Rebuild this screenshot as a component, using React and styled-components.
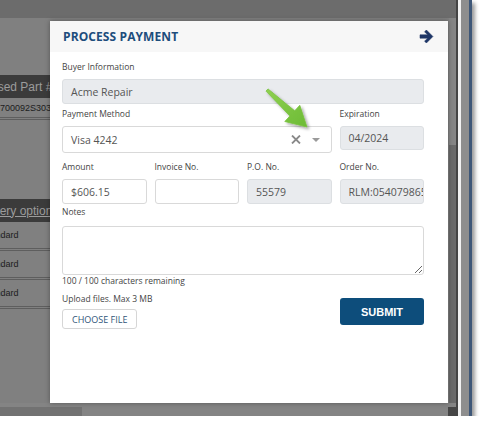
import styled, { createGlobalStyle } from "styled-components";

const GlobalStyle = createGlobalStyle`
  body {
    margin: 0;
    background: #ffffff;
    font-family: "Open Sans", "Liberation Sans", sans-serif;
  }
`;

const Shot = styled.div`
  position: relative;
  display: flex;
  width: 472px;
  height: 416px;
  background: #808080;
  box-shadow: 3px 3px 4px rgba(0, 0, 0, 0.4);
  overflow: hidden;
`;

const Page = styled.div`
  flex: 1;
  display: flex;
  flex-direction: column;
`;

const TopBar = styled.div`
  height: 18px;
  background: #6c6c6c;
`;

const PageBody = styled.div`
  flex: 1;
  display: flex;
`;

const Table = styled.div`
  width: 50px;
  display: flex;
  flex-direction: column;
  padding-top: 57px;
  font-family: "Liberation Sans", Arial, sans-serif;
  white-space: nowrap;
  overflow: hidden;
`;

const HeadBand = styled.div`
  height: 23px;
  margin-top: ${(p) => p.$gap || 0}px;
  display: flex;
  align-items: center;
  background: #3b3b3b;
  color: #9c9c9c;
  font-size: 12px;
  text-decoration: ${(p) => (p.$underline ? "underline" : "none")};
`;

const Clip = styled.span`
  margin-left: ${(p) => p.$shift || 0}px;
`;

const Cell = styled.div`
  height: ${(p) => p.$h || 28}px;
  display: flex;
  align-items: center;
  box-sizing: border-box;
  border-bottom: 3px double #5e5e5e;
  color: #1c1c1c;
  font-size: 9px;
`;

const Filler = styled.div`
  flex: 1;
`;

const ScrollTrack = styled.div`
  width: 7px;
  display: flex;
  flex-direction: column;
`;

const TrackPart = styled.div`
  height: ${(p) => (p.$h ? `${p.$h}px` : "auto")};
  flex: ${(p) => (p.$h ? "none" : 1)};
  background: ${(p) => p.$bg};
`;

const BottomBar = styled.div`
  height: 13px;
  display: flex;
  align-items: flex-end;
  background: #848484;
`;

const BottomSeg = styled.div`
  width: ${(p) => p.$w}px;
  height: 9px;
  background: ${(p) => p.$bg};
`;

const Strip = styled.div`
  width: ${(p) => p.$w}px;
  background: ${(p) => p.$bg};
`;

const Modal = styled.div`
  position: absolute;
  left: 50px;
  top: 21px;
  width: 398px;
  height: 382px;
  background: #ffffff;
  box-shadow: 0 0 5px rgba(0, 0, 0, 0.35);
  display: flex;
  flex-direction: column;
`;

const Header = styled.div`
  height: 31px;
  display: flex;
  align-items: center;
  justify-content: space-between;
  padding: 0 14px 0 13px;
  background: #f7f7f7;
`;

const Title = styled.h2`
  margin: 0;
  font-size: 12px;
  font-weight: 700;
  color: #1d4d7c;
  letter-spacing: 0.1px;
`;

const Body = styled.div`
  padding: 9px 24px 0 12px;
  display: flex;
  flex-direction: column;
`;

const Row = styled.div`
  display: grid;
  grid-template-columns: repeat(4, 1fr);
  column-gap: 8px;
  margin-top: ${(p) => p.$mt || 0}px;
`;

const Field = styled.div`
  display: flex;
  flex-direction: column;
  grid-column: span ${(p) => p.$span || 1};
  min-width: 0;
`;

const Label = styled.label`
  font-size: 8.5px;
  line-height: 12px;
  color: #444;
  margin-bottom: ${(p) => p.$mb ?? 6}px;
`;

const Input = styled.div`
  box-sizing: border-box;
  height: ${(p) => p.$h || 25}px;
  display: flex;
  align-items: center;
  padding: 0 8px;
  border: 1px solid ${(p) => (p.$readOnly ? "#dcdfe2" : "#d9d9d9")};
  border-radius: 3px;
  background: ${(p) => (p.$readOnly ? "#e9ebee" : "#ffffff")};
  color: #555;
  font-size: 10.5px;
  white-space: nowrap;
  overflow: hidden;
`;

const SelectValue = styled.span`
  flex: 1;
`;

const SelectControls = styled.div`
  display: flex;
  align-items: center;
  gap: 11px;
  margin-right: 3px;
`;

const TextArea = styled.textarea`
  box-sizing: border-box;
  height: 49px;
  margin-top: 2px;
  border: 1px solid #d9d9d9;
  border-radius: 3px;
  font-family: inherit;
`;

const Hint = styled.div`
  font-size: 8.5px;
  line-height: 12px;
  color: #444;
  margin-top: ${(p) => p.$mt || 0}px;
`;

const Footer = styled.div`
  display: flex;
  justify-content: space-between;
  align-items: flex-start;
`;

const Upload = styled.div`
  display: flex;
  flex-direction: column;
  align-items: flex-start;
`;

const FileButton = styled.button`
  box-sizing: border-box;
  height: 20px;
  margin-top: 4px;
  padding: 0 9px;
  border: 1px solid #d6d6d6;
  border-radius: 3px;
  background: #ffffff;
  color: #2f5579;
  font-family: "Open Sans", sans-serif;
  font-size: 9px;
`;

const SubmitButton = styled.button`
  box-sizing: border-box;
  width: 84px;
  height: 27px;
  margin-top: 11px;
  border: none;
  border-radius: 3px;
  background: #0d4d7b;
  color: #ffffff;
  font-family: "Liberation Sans", Arial, sans-serif;
  font-size: 11px;
  font-weight: 700;
`;

const Pointer = styled.svg`
  position: absolute;
  left: 255px;
  top: 80px;
  width: 60px;
  height: 55px;
  overflow: visible;
`;

const ArrowRight = () => (
  <svg width="15" height="13" viewBox="0 0 16 14">
    <path
      d="M1 5.2 H9.2 L5.9 1.9 L7.9 0 L14.9 7 L7.9 14 L5.9 12.1 L9.2 8.8 H1 Z"
      fill="#1d3566"
      stroke="#1d3566"
      strokeWidth="0.6"
      strokeLinejoin="round"
    />
  </svg>
);

const ClearIcon = () => (
  <svg width="10" height="9" viewBox="0 0 10 9">
    <path d="M1 0.5 L9 8.5 M9 0.5 L1 8.5" stroke="#8a8a8a" strokeWidth="1.8" />
  </svg>
);

const Caret = () => (
  <svg width="8" height="4" viewBox="0 0 8 4">
    <path d="M0 0 H8 L4 4 Z" fill="#9a9a9a" />
  </svg>
);

const deliveryRows = ["Standard", "Standard", "Standard"];

export default function App() {
  return (
    <>
      <GlobalStyle />
      <Shot>
        <Page>
          <TopBar />
          <PageBody>
            <Table>
              <HeadBand>
                <Clip $shift={-11}>Used Part #</Clip>
              </HeadBand>
              <Cell $h={22}>700092S3030</Cell>
              <HeadBand $gap={79} $underline>
                <Clip $shift={-27}>Delivery option</Clip>
              </HeadBand>
              {deliveryRows.map((r, i) => (
                <Cell key={i} $h={29}>
                  <Clip $shift={-18}>{r}</Clip>
                </Cell>
              ))}
            </Table>
            <Filler />
            <ScrollTrack>
              <TrackPart $h={127} $bg="#858585" />
              <TrackPart $bg="#6a6a6a" />
            </ScrollTrack>
          </PageBody>
          <BottomBar>
            <BottomSeg $w={82} $bg="#727272" />
            <Filler />
            <BottomSeg $w={8} $bg="#454545" />
          </BottomBar>
        </Page>
        <Strip $w={2} $bg="#454545" />
        <Strip $w={3} $bg="#f2f2f2" />
        <Strip $w={8} $bg="#8e8e8e" />
        <Strip $w={3} $bg="#3e5778" />

        <Modal>
          <Header>
            <Title>PROCESS PAYMENT</Title>
            <ArrowRight />
          </Header>
          <Body>
            <Row>
              <Field $span={4}>
                <Label>Buyer Information</Label>
                <Input $readOnly>Acme Repair</Input>
              </Field>
            </Row>
            <Row $mt={4}>
              <Field $span={3}>
                <Label>Payment Method</Label>
                <Input $h={27}>
                  <SelectValue>Visa 4242</SelectValue>
                  <SelectControls>
                    <ClearIcon />
                    <Caret />
                  </SelectControls>
                </Input>
              </Field>
              <Field>
                <Label>Expiration</Label>
                <Input $readOnly $h={24}>
                  04/2024
                </Input>
              </Field>
            </Row>
            <Row $mt={8}>
              <Field>
                <Label>Amount</Label>
                <Input>$606.15</Input>
              </Field>
              <Field>
                <Label>Invoice No.</Label>
                <Input />
              </Field>
              <Field>
                <Label>P.O. No.</Label>
                <Input $readOnly>55579</Input>
              </Field>
              <Field>
                <Label>Order No.</Label>
                <Input $readOnly>RLM:054079865</Input>
              </Field>
            </Row>
            <Row $mt={2}>
              <Field $span={4}>
                <Label>Notes</Label>
                <TextArea />
              </Field>
            </Row>
            <Hint>100 / 100 characters remaining</Hint>
            <Footer>
              <Upload>
                <Hint $mt={6}>Upload files. Max 3 MB</Hint>
                <FileButton>CHOOSE FILE</FileButton>
              </Upload>
              <SubmitButton>SUBMIT</SubmitButton>
            </Footer>
          </Body>
        </Modal>

        <Pointer viewBox="0 0 60 55">
          <defs>
            <filter id="pshadow" x="-30%" y="-30%" width="160%" height="160%">
              <feDropShadow dx="2" dy="2" stdDeviation="1.4" floodColor="#000" floodOpacity="0.35" />
            </filter>
            <linearGradient id="pgreen" x1="0" y1="0" x2="1" y2="1">
              <stop offset="0" stopColor="#8fd050" />
              <stop offset="1" stopColor="#6cbb35" />
            </linearGradient>
          </defs>
          <polygon
            points="13,8.9 39.7,30.8 44.8,25.3 52,47 29.8,41.5 34.9,36 11,11.1"
            fill="url(#pgreen)"
            stroke="#78c23e"
            strokeWidth="0.8"
            strokeLinejoin="round"
            filter="url(#pshadow)"
          />
        </Pointer>
      </Shot>
    </>
  );
}
